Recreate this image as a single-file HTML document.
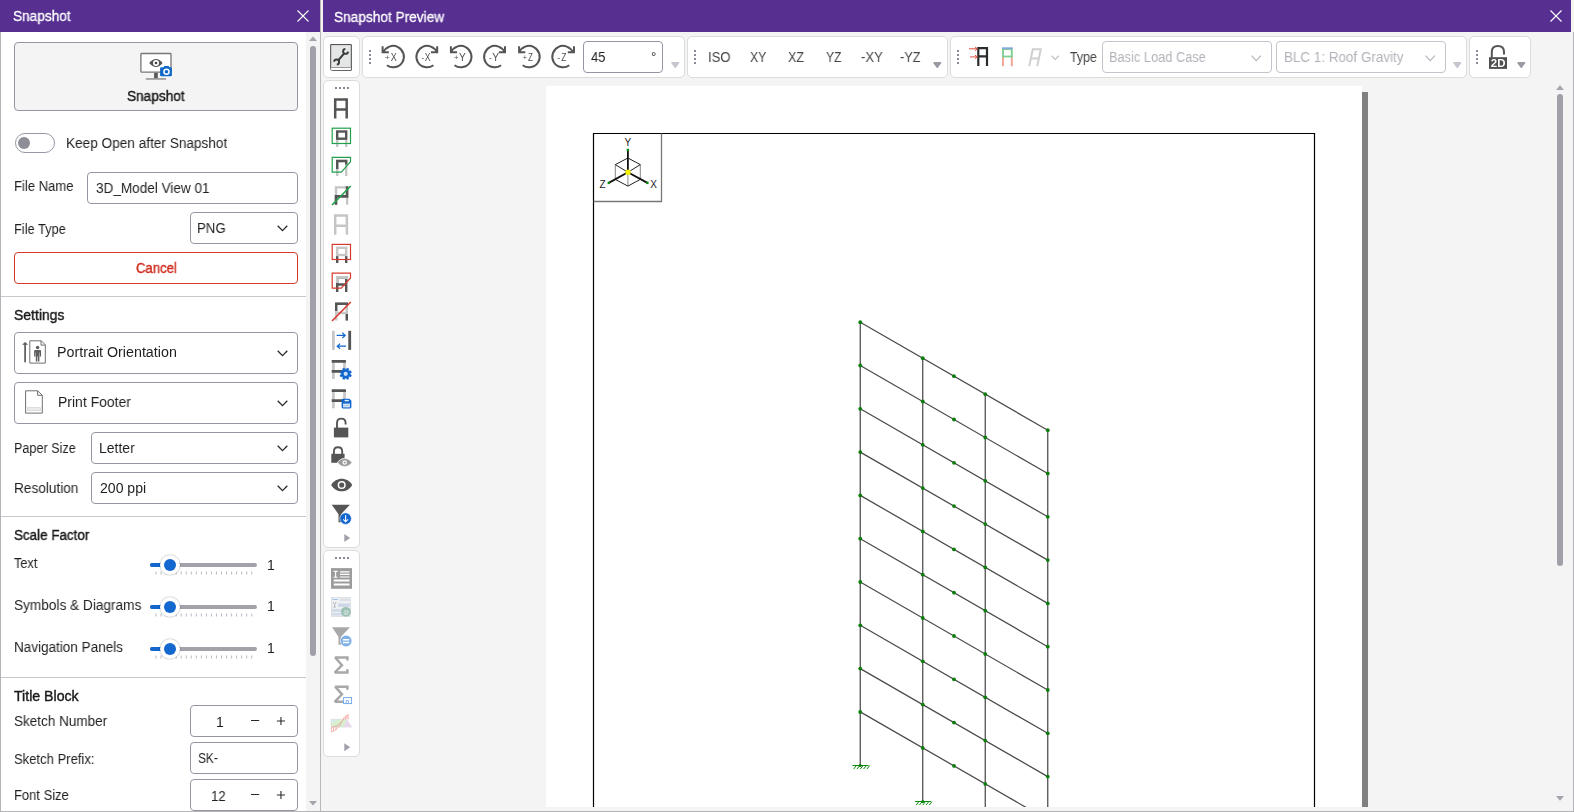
<!DOCTYPE html>
<html lang="en">
<head>
<meta charset="utf-8">
<title>Snapshot Preview</title>
<style>
*{box-sizing:border-box;margin:0;padding:0}
html,body{width:1574px;height:812px;overflow:hidden;background:#f4f4f4}
body{position:relative;font-family:"Liberation Sans",sans-serif;font-size:14px;color:#1f1f1f}
.abs{position:absolute}
.t{position:absolute;white-space:nowrap;line-height:1;transform-origin:0 0;will-change:transform}
.tb{-webkit-text-stroke:0.3px #fff}
.titlebar{position:absolute;top:0;height:32px;background:#562f91}
.box{position:absolute;border:1px solid #9696a3;border-radius:4px;background:#fff}
.grp{position:absolute;background:#fff;border:1px solid #dcdcdc;border-radius:5px}
.hr{position:absolute;left:1px;width:305px;height:1px;background:#c6c6cc}
svg{position:absolute;overflow:visible}
.dot{position:absolute;width:2px;height:2px;background:#8a8a98}
</style>
</head>
<body>
<!-- ================= LEFT PANEL ================= -->
<div class="abs" style="left:0;top:0;width:306px;height:812px;background:#fff"></div>
<div class="abs" style="left:0;top:32px;width:1px;height:780px;background:#b4b4b8"></div>
<div class="titlebar" style="left:0;width:320px"></div>
<span class="t tb" style="left:13.20px;top:9.00px;font-size:14.0px;transform:scaleX(0.9735);color:#fff">Snapshot</span>
<svg style="left:297px;top:10px" width="12" height="12" viewBox="0 0 12 12"><path d="M0.5 0.5L11.5 11.5M11.5 0.5L0.5 11.5" stroke="#fff" stroke-width="1.1" fill="none"/></svg>

<!-- snapshot button -->
<div class="box" style="left:14px;top:42px;width:284px;height:69px;background:#f4f4f4"></div>
<svg style="left:139px;top:51px" width="34" height="30" viewBox="139 51 34 30">
  <rect x="140.9" y="53.5" width="30.1" height="18.7" fill="#fff" stroke="#777" stroke-width="1.3" rx="0.8"/>
  <rect x="154.1" y="72.8" width="3.7" height="5.6" fill="#5a5a5a"/>
  <rect x="145.8" y="78.2" width="20.2" height="1.5" fill="#909090"/>
  <path d="M149.2 63C151.5 60.2 153.7 59 156 59s4.5 1.2 6.6 4c-2.1 2.8-4.3 4-6.6 4s-4.5-1.2-6.8-4z" fill="#555"/>
  <circle cx="156" cy="63" r="3" fill="#fff"/><circle cx="156" cy="63" r="1.3" fill="#444"/>
  <path d="M160.1 68.3q0-1.1 1.1-1.1h2.3l0.9-1.2h4.2l0.9 1.2h1.3q1.1 0 1.1 1.1v6.9q0 1.1-1.1 1.1h-9.6q-1.1 0-1.1-1.1z" fill="#1068c8"/>
  <circle cx="166.5" cy="71.7" r="3.3" fill="#fff"/><circle cx="166.5" cy="71.7" r="1.8" fill="#1068c8"/>
</svg>
<span class="t" style="left:127.30px;top:89.00px;font-size:14px;transform:scaleX(0.9735);-webkit-text-stroke:0.4px;color:#1a1a1a">Snapshot</span>

<!-- toggle -->
<div class="abs" style="left:15px;top:133px;width:40px;height:20px;border:1px solid #9698a4;border-radius:10px;background:#fff"></div>
<div class="abs" style="left:18px;top:137px;width:12px;height:12px;border-radius:6px;background:#8e8e98"></div>
<span class="t" style="left:66.33px;top:136.00px;font-size:14px;transform:scaleX(0.9727)">Keep Open after Snapshot</span>

<!-- file name -->
<span class="t" style="left:13.67px;top:179.00px;font-size:14px;transform:scaleX(0.9332)">File Name</span>
<div class="box" style="left:87px;top:172px;width:211px;height:32px"></div>
<span class="t" style="left:95.50px;top:181.00px;font-size:14px;transform:scaleX(0.9679)">3D_Model View 01</span>

<!-- file type -->
<span class="t" style="left:13.68px;top:222.00px;font-size:14px;transform:scaleX(0.9158)">File Type</span>
<div class="box" style="left:190px;top:212px;width:108px;height:32px"></div>
<span class="t" style="left:197.45px;top:221.00px;font-size:14px;transform:scaleX(0.9456)">PNG</span>
<svg style="left:277px;top:225px" width="11" height="7" viewBox="0 0 11 7"><path d="M0.7 0.8L5.5 5.6L10.3 0.8" stroke="#2a2a2a" stroke-width="1.3" fill="none"/></svg>

<!-- cancel -->
<div class="box" style="left:14px;top:252px;width:284px;height:32px;border-color:#d63a2c"></div>
<span class="t" style="left:135.80px;top:261.00px;font-size:14px;transform:scaleX(0.9363);-webkit-text-stroke:0.4px;color:#cf2a1d">Cancel</span>

<div class="hr" style="top:296px"></div>
<span class="t" style="left:14.20px;top:308.00px;font-size:14px;transform:scaleX(0.9963);-webkit-text-stroke:0.4px;color:#1a1a1a">Settings</span>

<!-- portrait orientation -->
<div class="box" style="left:14px;top:332px;width:284px;height:42px"></div>
<svg style="left:20px;top:338px" width="30" height="28" viewBox="20 338 30 28">
  <path d="M25.1 362.2V343.5" stroke="#5a5a5a" stroke-width="1.7" fill="none"/>
  <path d="M22.1 344.7L25.1 342L28.1 344.7z" fill="#5a5a5a"/>
  <path d="M29.8 340.8H41.3L45.3 344.8V363.1H29.8z" fill="#fff" stroke="#707070" stroke-width="1"/>
  <path d="M41.0 340.8V345.1H45.3" fill="none" stroke="#707070" stroke-width="1"/>
  <circle cx="37.6" cy="347.5" r="1.7" fill="#5e5e5e"/>
  <path d="M34.1 351.2q0-1.2 1.2-1.2h4.6q1.2 0 1.2 1.2v5.2h-1.3v-4h-0.4v9.2h-1.5v-5h-0.6v5h-1.5v-9.2h-0.4v4h-1.3z" fill="#5e5e5e"/>
</svg>
<span class="t" style="left:57.48px;top:345.00px;font-size:14px;transform:scaleX(1.0198)">Portrait Orientation</span>
<svg style="left:277px;top:350px" width="11" height="7" viewBox="0 0 11 7"><path d="M0.7 0.8L5.5 5.6L10.3 0.8" stroke="#2a2a2a" stroke-width="1.3" fill="none"/></svg>

<!-- print footer -->
<div class="box" style="left:14px;top:382px;width:284px;height:42px"></div>
<svg style="left:20px;top:388px" width="30" height="28" viewBox="20 388 30 28">
  <path d="M25.6 390.8H37.6L42.3 395.3V413.1H25.6z" fill="#fff" stroke="#707070" stroke-width="1"/>
  <path d="M37.6 390.8V395.3H42.3" fill="none" stroke="#707070" stroke-width="1"/>
  <rect x="27.6" y="407.7" width="12.8" height="2.8" fill="#ececec" stroke="#cfcfcf" stroke-width="0.7"/>
</svg>
<span class="t" style="left:57.50px;top:395.00px;font-size:14px;transform:scaleX(0.9962)">Print Footer</span>
<svg style="left:277px;top:400px" width="11" height="7" viewBox="0 0 11 7"><path d="M0.7 0.8L5.5 5.6L10.3 0.8" stroke="#2a2a2a" stroke-width="1.3" fill="none"/></svg>

<!-- paper size -->
<span class="t" style="left:13.70px;top:441.00px;font-size:14px;transform:scaleX(0.9011)">Paper Size</span>
<div class="box" style="left:91px;top:432px;width:207px;height:32px"></div>
<span class="t" style="left:98.60px;top:441.00px;font-size:14px;transform:scaleX(0.9961)">Letter</span>
<svg style="left:277px;top:445px" width="11" height="7" viewBox="0 0 11 7"><path d="M0.7 0.8L5.5 5.6L10.3 0.8" stroke="#2a2a2a" stroke-width="1.3" fill="none"/></svg>

<!-- resolution -->
<span class="t" style="left:13.63px;top:481.00px;font-size:14px;transform:scaleX(0.9741)">Resolution</span>
<div class="box" style="left:91px;top:472px;width:207px;height:32px"></div>
<span class="t" style="left:99.60px;top:481.00px;font-size:14px;transform:scaleX(1.0039)">200 ppi</span>
<svg style="left:277px;top:485px" width="11" height="7" viewBox="0 0 11 7"><path d="M0.7 0.8L5.5 5.6L10.3 0.8" stroke="#2a2a2a" stroke-width="1.3" fill="none"/></svg>

<div class="hr" style="top:516px"></div>
<span class="t" style="left:14.20px;top:528.00px;font-size:14px;transform:scaleX(0.9566);-webkit-text-stroke:0.4px;color:#1a1a1a">Scale Factor</span>

<!-- sliders -->
<span class="t" style="left:14.20px;top:556.00px;font-size:14px;transform:scaleX(0.9075)">Text</span>
<div class="abs" style="left:150px;top:563px;width:107px;height:4px;border-radius:2px;background:#a2a2aa"></div>
<div class="abs" style="left:150px;top:563px;width:20px;height:4px;border-radius:2px;background:#1467cf"></div>
<svg style="left:0;top:0" width="1" height="1"><path d="M156.00 571.5V574.5M161.04 571.5V574.5M166.08 571.5V574.5M171.12 571.5V574.5M176.16 571.5V574.5M181.20 571.5V574.5M186.24 571.5V574.5M191.28 571.5V574.5M196.32 571.5V574.5M201.36 571.5V574.5M206.40 571.5V574.5M211.44 571.5V574.5M216.48 571.5V574.5M221.52 571.5V574.5M226.56 571.5V574.5M231.60 571.5V574.5M236.64 571.5V574.5M241.68 571.5V574.5M246.72 571.5V574.5M251.76 571.5V574.5" stroke="#b9b9c1" stroke-width="1" fill="none"/></svg>
<div class="abs" style="left:160.4px;top:555px;width:20px;height:20px;border-radius:10px;background:#fff;box-shadow:0 0 1.5px rgba(0,0,0,.45)"></div>
<div class="abs" style="left:164.4px;top:559px;width:12px;height:12px;border-radius:6px;background:#1467cf"></div>
<span class="t" style="left:266.50px;top:558.00px;font-size:14px;transform:scaleX(1.0000)">1</span>
<span class="t" style="left:14.20px;top:598.00px;font-size:14px;transform:scaleX(0.9740)">Symbols &amp; Diagrams</span>
<div class="abs" style="left:150px;top:605px;width:107px;height:4px;border-radius:2px;background:#a2a2aa"></div>
<div class="abs" style="left:150px;top:605px;width:20px;height:4px;border-radius:2px;background:#1467cf"></div>
<svg style="left:0;top:0" width="1" height="1"><path d="M156.00 613.5V616.5M161.04 613.5V616.5M166.08 613.5V616.5M171.12 613.5V616.5M176.16 613.5V616.5M181.20 613.5V616.5M186.24 613.5V616.5M191.28 613.5V616.5M196.32 613.5V616.5M201.36 613.5V616.5M206.40 613.5V616.5M211.44 613.5V616.5M216.48 613.5V616.5M221.52 613.5V616.5M226.56 613.5V616.5M231.60 613.5V616.5M236.64 613.5V616.5M241.68 613.5V616.5M246.72 613.5V616.5M251.76 613.5V616.5" stroke="#b9b9c1" stroke-width="1" fill="none"/></svg>
<div class="abs" style="left:160.4px;top:597px;width:20px;height:20px;border-radius:10px;background:#fff;box-shadow:0 0 1.5px rgba(0,0,0,.45)"></div>
<div class="abs" style="left:164.4px;top:601px;width:12px;height:12px;border-radius:6px;background:#1467cf"></div>
<span class="t" style="left:266.50px;top:599.00px;font-size:14px;transform:scaleX(1.0000)">1</span>
<span class="t" style="left:13.63px;top:640.00px;font-size:14px;transform:scaleX(0.9656)">Navigation Panels</span>
<div class="abs" style="left:150px;top:647px;width:107px;height:4px;border-radius:2px;background:#a2a2aa"></div>
<div class="abs" style="left:150px;top:647px;width:20px;height:4px;border-radius:2px;background:#1467cf"></div>
<svg style="left:0;top:0" width="1" height="1"><path d="M156.00 655.5V658.5M161.04 655.5V658.5M166.08 655.5V658.5M171.12 655.5V658.5M176.16 655.5V658.5M181.20 655.5V658.5M186.24 655.5V658.5M191.28 655.5V658.5M196.32 655.5V658.5M201.36 655.5V658.5M206.40 655.5V658.5M211.44 655.5V658.5M216.48 655.5V658.5M221.52 655.5V658.5M226.56 655.5V658.5M231.60 655.5V658.5M236.64 655.5V658.5M241.68 655.5V658.5M246.72 655.5V658.5M251.76 655.5V658.5" stroke="#b9b9c1" stroke-width="1" fill="none"/></svg>
<div class="abs" style="left:160.4px;top:639px;width:20px;height:20px;border-radius:10px;background:#fff;box-shadow:0 0 1.5px rgba(0,0,0,.45)"></div>
<div class="abs" style="left:164.4px;top:643px;width:12px;height:12px;border-radius:6px;background:#1467cf"></div>
<span class="t" style="left:266.50px;top:641.00px;font-size:14px;transform:scaleX(1.0000)">1</span>


<div class="hr" style="top:677px"></div>
<span class="t" style="left:14.20px;top:689.00px;font-size:14px;transform:scaleX(1.0099);-webkit-text-stroke:0.4px;color:#1a1a1a">Title Block</span>

<span class="t" style="left:14.20px;top:714.00px;font-size:14px;transform:scaleX(0.9657)">Sketch Number</span>
<div class="box" style="left:190px;top:705px;width:108px;height:32px"></div>
<span class="t" style="left:215.70px;top:715.00px;font-size:14px;transform:scaleX(1.0000)">1</span>
<svg style="left:250px;top:715px" width="36" height="12" viewBox="250 715 36 12"><path d="M251 720.5H259.2M276.9 721H285M280.95 717V725" stroke="#2a2a2a" stroke-width="1.1" fill="none"/></svg>

<span class="t" style="left:14.20px;top:752.00px;font-size:14px;transform:scaleX(0.9324)">Sketch Prefix:</span>
<div class="box" style="left:190px;top:742px;width:108px;height:32px"></div>
<span class="t" style="left:198.40px;top:751.00px;font-size:14px;transform:scaleX(0.8490)">SK-</span>

<span class="t" style="left:13.67px;top:788.00px;font-size:14px;transform:scaleX(0.9271)">Font Size</span>
<div class="box" style="left:190px;top:779px;width:108px;height:32px"></div>
<span class="t" style="left:211.05px;top:789.00px;font-size:14px;transform:scaleX(0.9468)">12</span>
<svg style="left:250px;top:789px" width="36" height="12" viewBox="250 789 36 12"><path d="M251 794.5H259.2M276.9 795H285M280.95 791V799" stroke="#2a2a2a" stroke-width="1.1" fill="none"/></svg>

<!-- left scrollbar -->
<div class="abs" style="left:306px;top:32px;width:14px;height:780px;background:#f4f4f4"></div>
<svg style="left:309px;top:36px" width="8" height="5" viewBox="0 0 8 5"><path d="M0 5L4 0.4L8 5z" fill="#a4a4ac"/></svg>
<div class="abs" style="left:310px;top:46px;width:6px;height:610px;border-radius:3px;background:#a0a0a8"></div>
<svg style="left:309px;top:801px" width="8" height="5" viewBox="0 0 8 5"><path d="M0 0L4 4.6L8 0z" fill="#a4a4ac"/></svg>

<!-- ================= DIVIDER ================= -->
<div class="abs" style="left:320px;top:0;width:3px;height:812px;background:#f4f4f4"></div>
<div class="abs" style="left:320px;top:0;width:1px;height:812px;background:#b9b9b9"></div>

<!-- ================= RIGHT PANEL ================= -->
<div class="titlebar" style="left:323px;width:1248px"></div>
<span class="t tb" style="left:334.00px;top:10.00px;font-size:14.0px;transform:scaleX(0.9760);color:#fff">Snapshot Preview</span>
<svg style="left:1550px;top:10px" width="12" height="12" viewBox="0 0 12 12"><path d="M0.5 0.5L11.5 11.5M11.5 0.5L0.5 11.5" stroke="#fff" stroke-width="1.1" fill="none"/></svg>

<div class="grp" style="left:323px;top:36px;width:37px;height:42px"></div>
<div class="grp" style="left:362px;top:36px;width:323px;height:42px"></div>
<div class="grp" style="left:687px;top:36px;width:261px;height:42px"></div>
<div class="grp" style="left:950px;top:36px;width:517px;height:42px"></div>
<div class="grp" style="left:1469px;top:36px;width:62px;height:42px"></div>
<svg style="left:328px;top:42px" width="26" height="31" viewBox="328 42 26 31">
  <path d="M330.7 44.6H351.3V70.3H332.2Q330.7 70.3 330.7 68.8z" fill="#e5e7e6" stroke="#444" stroke-width="1"/>
  <rect x="331.2" y="68" width="19.6" height="1.9" fill="#fff"/>
  <rect x="331.2" y="67" width="19.6" height="1" fill="#999"/>
  <path d="M338.2 60.4L344.6 52.9" stroke="#3a3a3a" stroke-width="2.1" fill="none"/><path d="M345.38 48.9A2.5 2.5 0 1 0 348.09 51.62M336.82 64.49A2.5 2.5 0 1 0 334.11 61.78" stroke="#3a3a3a" stroke-width="1.9" fill="none"/>
</svg>
<div class="dot" style="left:369px;top:50px"></div><div class="dot" style="left:369px;top:54px"></div><div class="dot" style="left:369px;top:58px"></div><div class="dot" style="left:369px;top:62px"></div>
<div class="dot" style="left:694px;top:50px"></div><div class="dot" style="left:694px;top:54px"></div><div class="dot" style="left:694px;top:58px"></div><div class="dot" style="left:694px;top:62px"></div>
<div class="dot" style="left:957px;top:50px"></div><div class="dot" style="left:957px;top:54px"></div><div class="dot" style="left:957px;top:58px"></div><div class="dot" style="left:957px;top:62px"></div>
<div class="dot" style="left:1476px;top:50px"></div><div class="dot" style="left:1476px;top:54px"></div><div class="dot" style="left:1476px;top:58px"></div><div class="dot" style="left:1476px;top:62px"></div>
<svg style="left:0;top:0" width="1" height="1"><path d="M386.91 65.26A10.7 10.7 0 1 0 383.28 52.60M382.60 46.3V52.2H388.80" stroke="#555" stroke-width="2" fill="none"/><text x="384.75" y="59.9" font-size="7.6" fill="#5a5a5a" textLength="5.1" lengthAdjust="spacingAndGlyphs">+</text><text x="390.7" y="60.9" font-size="10.2" fill="#4f4f4f" textLength="6.0" lengthAdjust="spacingAndGlyphs">X</text></svg>
<svg style="left:0;top:0" width="1" height="1"><path d="M433.39 65.26A10.7 10.7 0 1 1 437.02 52.60M437.20 46.3V52.2H431.00" stroke="#555" stroke-width="2" fill="none"/><text x="421.50" y="60.6" font-size="8.5" fill="#555" textLength="2.5" lengthAdjust="spacingAndGlyphs">-</text><text x="424.8" y="60.9" font-size="10.2" fill="#4f4f4f" textLength="5.8" lengthAdjust="spacingAndGlyphs">X</text></svg>
<svg style="left:0;top:0" width="1" height="1"><path d="M454.51 65.26A10.7 10.7 0 1 0 450.88 52.60M450.90 46.3V52.2H457.10" stroke="#555" stroke-width="2" fill="none"/><text x="453.75" y="59.9" font-size="7.6" fill="#5a5a5a" textLength="5.0" lengthAdjust="spacingAndGlyphs">+</text><text x="458.9" y="60.9" font-size="10.2" fill="#4f4f4f" textLength="6.8" lengthAdjust="spacingAndGlyphs">Y</text></svg>
<svg style="left:0;top:0" width="1" height="1"><path d="M501.09 65.26A10.7 10.7 0 1 1 504.72 52.60M505.00 46.3V52.2H498.80" stroke="#555" stroke-width="2" fill="none"/><text x="489.00" y="60.6" font-size="8.5" fill="#555" textLength="2.9" lengthAdjust="spacingAndGlyphs">-</text><text x="492.2" y="60.9" font-size="10.2" fill="#4f4f4f" textLength="6.8" lengthAdjust="spacingAndGlyphs">Y</text></svg>
<svg style="left:0;top:0" width="1" height="1"><path d="M522.71 65.26A10.7 10.7 0 1 0 519.08 52.60M519.10 46.3V52.2H525.30" stroke="#555" stroke-width="2" fill="none"/><text x="522.45" y="59.9" font-size="7.6" fill="#5a5a5a" textLength="4.7" lengthAdjust="spacingAndGlyphs">+</text><text x="528.0" y="60.9" font-size="10.2" fill="#4f4f4f" textLength="4.9" lengthAdjust="spacingAndGlyphs">Z</text></svg>
<svg style="left:0;top:0" width="1" height="1"><path d="M569.29 65.26A10.7 10.7 0 1 1 572.92 52.60M574.00 46.3V52.2H567.80" stroke="#555" stroke-width="2" fill="none"/><text x="557.30" y="60.6" font-size="8.5" fill="#555" textLength="3.0" lengthAdjust="spacingAndGlyphs">-</text><text x="561.2" y="60.9" font-size="10.2" fill="#4f4f4f" textLength="5.2" lengthAdjust="spacingAndGlyphs">Z</text></svg>
<div class="box" style="left:583px;top:41px;width:80px;height:32px"></div>
<span class="t" style="left:591.00px;top:50.00px;font-size:14px;transform:scaleX(0.9249)">45</span>
<span class="t" style="left:650.90px;top:50.00px;font-size:14px;transform:scaleX(0.9200)">°</span>
<svg style="left:670.6px;top:62.2px" width="9" height="6" viewBox="0 0 9 6"><path d="M1 0.8H7.6L4.3 5.2z" fill="#c6c6ce" stroke="#c6c6ce" stroke-width="1.5" stroke-linejoin="round"/></svg>
<span class="t" style="left:707.87px;top:50.00px;font-size:14px;transform:scaleX(0.9299);color:#444">ISO</span>
<span class="t" style="left:750.00px;top:50.00px;font-size:14px;transform:scaleX(0.8791);color:#444">XY</span>
<span class="t" style="left:788.10px;top:50.00px;font-size:14px;transform:scaleX(0.8998);color:#444">XZ</span>
<span class="t" style="left:826.30px;top:50.00px;font-size:14px;transform:scaleX(0.8671);color:#444">YZ</span>
<span class="t" style="left:860.70px;top:50.00px;font-size:14px;transform:scaleX(0.9333);color:#444">-XY</span>
<span class="t" style="left:900.00px;top:50.00px;font-size:14px;transform:scaleX(0.9087);color:#444">-YZ</span>
<svg style="left:933.4px;top:62.2px" width="9" height="6" viewBox="0 0 9 6"><path d="M1 0.8H7.6L4.3 5.2z" fill="#9a9aa5" stroke="#9a9aa5" stroke-width="1.5" stroke-linejoin="round"/></svg>
<svg style="left:0;top:0" width="1" height="1">
  <path d="M978.3 66V48.1H987V66M978.3 56.4H987" stroke="#2b2b2b" stroke-width="2.2" fill="none"/>
  <path d="M969 48.8H977M970 56.9H977" stroke="#e0513e" stroke-width="1" fill="none"/>
  <path d="M975 47L977.3 48.8L975 50.6M975 55.1L977.3 56.9L975 58.7" stroke="#e0513e" stroke-width="1" fill="none"/>
  <path d="M1003 66.2V57" stroke="#f2a394" stroke-width="1.9" fill="none"/><path d="M1011.8 66.2V57" stroke="#f2a394" stroke-width="1.9" fill="none"/>
  <path d="M1003 57.2V49H1011.8V57.2" stroke="#7fcf93" stroke-width="1.9" fill="none"/>
  <path d="M1002 56.5H1012.8" stroke="#7fcf93" stroke-width="1.8" fill="none"/>
  <path d="M1002 48.2H1012.8" stroke="#86a8de" stroke-width="1.8" fill="none"/>
  <path d="M1029.2 66.2L1032.8 49.2H1040.8L1037.2 66.2M1030.9 58.5H1038.9" stroke="#d0d0d0" stroke-width="2" fill="none"/>
  <path d="M1051.6 55.8L1055.2 59.4L1058.8 55.8" stroke="#c2c2c8" stroke-width="1.3" fill="none"/>
</svg>
<span class="t" style="left:1069.70px;top:50.00px;font-size:14px;transform:scaleX(0.8866);color:#444">Type</span>
<div class="box" style="left:1102px;top:41px;width:170px;height:32px;border-color:#c4c4cc"></div>
<span class="t" style="left:1109.39px;top:50.00px;font-size:14px;transform:scaleX(0.9148);color:#b2b2ba">Basic Load Case</span>
<svg style="left:1251px;top:54.5px" width="11" height="7" viewBox="0 0 11 7"><path d="M0.5 0.7L5.2 5.6L9.9 0.7" stroke="#b2b2ba" stroke-width="1.1" fill="none"/></svg>
<div class="box" style="left:1276px;top:41px;width:170px;height:32px;border-color:#c4c4cc"></div>
<span class="t" style="left:1283.54px;top:50.00px;font-size:14px;transform:scaleX(0.9596);color:#b2b2ba">BLC 1: Roof Gravity</span>
<svg style="left:1425px;top:54.5px" width="11" height="7" viewBox="0 0 11 7"><path d="M0.5 0.7L5.2 5.6L9.9 0.7" stroke="#b2b2ba" stroke-width="1.1" fill="none"/></svg>
<svg style="left:1452.6px;top:62.2px" width="9" height="6" viewBox="0 0 9 6"><path d="M1 0.8H7.6L4.3 5.2z" fill="#c6c6ce" stroke="#c6c6ce" stroke-width="1.5" stroke-linejoin="round"/></svg>
<svg style="left:0;top:0" width="1" height="1">
  <path d="M1491.8 57.5V52Q1491.8 46 1497.9 46Q1504 46 1504 52V54.4" stroke="#555" stroke-width="2" fill="none"/>
  <rect x="1489" y="57.2" width="18" height="11.7" fill="#4f4f4f"/>
  <text x="1490.8" y="67.4" font-size="11" font-weight="bold" fill="#fff" textLength="14.6" lengthAdjust="spacingAndGlyphs">2D</text>
</svg>
<svg style="left:1516.7px;top:62.2px" width="9" height="6" viewBox="0 0 9 6"><path d="M1 0.8H7.6L4.3 5.2z" fill="#9a9aa5" stroke="#9a9aa5" stroke-width="1.5" stroke-linejoin="round"/></svg>


<div class="grp" style="left:323px;top:80px;width:37px;height:468px"></div>
<div class="grp" style="left:323px;top:550px;width:37px;height:207px"></div>
<div class="dot" style="left:335px;top:87px"></div><div class="dot" style="left:339px;top:87px"></div><div class="dot" style="left:343px;top:87px"></div><div class="dot" style="left:347px;top:87px"></div>
<div class="dot" style="left:335px;top:557px"></div><div class="dot" style="left:339px;top:557px"></div><div class="dot" style="left:343px;top:557px"></div><div class="dot" style="left:347px;top:557px"></div>
<svg style="left:0;top:0" width="1" height="1">
<path d="M335.2 118.6V99.4H346.7V118.6M335.2 109.6H346.7" stroke="#555" stroke-width="2.5" fill="none"/>
<path d="M337.2 140V147M346.2 140V147" stroke="#c6c6c6" stroke-width="2.4" fill="none"/><rect x="337.2" y="131.5" width="9" height="7.2" stroke="#555" stroke-width="2.4" fill="none"/><rect x="332.2" y="128.2" width="18.3" height="15.3" stroke="#22a04b" stroke-width="1.2" fill="none"/>
<path d="M337.2 176V161H346.2V176" stroke="#c6c6c6" stroke-width="2.4" fill="none"/><path d="M337.2 169V161H346.2V164.5" stroke="#555" stroke-width="2.4" fill="none"/><path d="M332.2 157.3H350.5V161.7L341.3 172.2H332.2z" stroke="#22a04b" stroke-width="1.2" fill="none"/>
<path d="M336 204.7V187.4H347.1V204.7" stroke="#c6c6c6" stroke-width="2.4" fill="none"/><path d="M336 204.7V196.4H347.1V186.3" stroke="#555" stroke-width="2.6" fill="none"/><path d="M332 205L350.8 186" stroke="#22a04b" stroke-width="1.6" fill="none"/>
<path d="M335.2 234.7V215.6H346.9V234.7M335.2 225.8H346.9" stroke="#c6c6c6" stroke-width="2.5" fill="none"/>
<path d="M337.2 256V263M346.2 256V263" stroke="#555" stroke-width="2.4" fill="none"/><rect x="337.2" y="247.8" width="9" height="7.2" stroke="#c6c6c6" stroke-width="2.4" fill="none"/><rect x="332.2" y="244.4" width="18.3" height="15.1" stroke="#d63a2c" stroke-width="1.2" fill="none"/>
<path d="M337.2 292V277.2H346.2V292M337.2 284.5H346.2" stroke="#555" stroke-width="2.4" fill="none"/><path d="M337.2 283V277.2H346.2V279" stroke="#c6c6c6" stroke-width="2.4" fill="none"/><path d="M332.2 273.2H350.5V277.9L341.3 288.2H332.2z" stroke="#d63a2c" stroke-width="1.2" fill="none"/>
<path d="M336.2 320.6V303.7H346.8V320.6M336.2 313H346.8" stroke="#c6c6c6" stroke-width="2.4" fill="none"/><path d="M336.2 311V303.7H346.8V305M346.8 314V320.6" stroke="#555" stroke-width="2.4" fill="none"/><path d="M332 321L350.8 302" stroke="#d63a2c" stroke-width="1.6" fill="none"/>
<rect x="332" y="330.8" width="2.8" height="19.1" fill="#c6c6c6"/><rect x="348.3" y="330.8" width="2.8" height="19.1" fill="#555"/><path d="M336.6 335.4H345M342.3 332.8L345.2 335.4L342.3 338M346 346.2H337.4M340.1 343.6L337.2 346.2L340.1 348.8" stroke="#1267cf" stroke-width="1.2" fill="none"/>
<path d="M333.4 360.9V378.9M344.5 360.9V371.9" stroke="#c6c6c6" stroke-width="2.7" fill="none"/><path d="M331.7 361.29999999999995H345.9M331.7 371.29999999999995H343" stroke="#555" stroke-width="2.8" fill="none"/><path d="M349.98 374.20L351.45 375.10L350.69 376.95L349.01 376.55L348.45 377.11L348.85 378.79L347.00 379.55L346.10 378.08L345.30 378.08L344.40 379.55L342.55 378.79L342.95 377.11L342.39 376.55L340.71 376.95L339.95 375.10L341.42 374.20L341.42 373.40L339.95 372.50L340.71 370.65L342.39 371.05L342.95 370.49L342.55 368.81L344.40 368.05L345.30 369.52L346.10 369.52L347.00 368.05L348.85 368.81L348.45 370.49L349.01 371.05L350.69 370.65L351.45 372.50L349.98 373.40z" fill="#1267cf" stroke="#1267cf" stroke-width="0.5" stroke-linejoin="round"/><circle cx="345.7" cy="373.8" r="2.1" fill="#cfe0f6"/>
<path d="M333.4 390.2V408.2M344.5 390.2V401.2" stroke="#c6c6c6" stroke-width="2.7" fill="none"/><path d="M331.7 390.59999999999997H345.9M331.7 400.59999999999997H343" stroke="#555" stroke-width="2.8" fill="none"/><path d="M341.6 400.2Q341.6 398.8 343 398.8H349.4L351.4 400.8V407Q351.4 408.4 350 408.4H343Q341.6 408.4 341.6 407z" fill="#1267cf"/><rect x="344.6" y="399.9" width="4.2" height="1.4" fill="#e6eefa"/><rect x="343" y="403.6" width="7" height="3.8" fill="#d3e2f6"/><rect x="343" y="405.2" width="7" height="0.6" fill="#9fc0ec"/>
<path d="M337 428V423Q337 418.6 341.3 418.6Q345.6 418.6 345.6 423V424.6" stroke="#555" stroke-width="1.9" fill="none"/><rect x="333.9" y="427.6" width="14.4" height="9.8" fill="#555"/>
<path d="M333.9 454V451.5Q333.9 447.3 338 447.3Q342.2 447.3 342.2 451.5V454" stroke="#555" stroke-width="1.9" fill="none"/><rect x="331.3" y="453.8" width="13.3" height="9" fill="#555"/><path d="M337.2 462.5Q340.8 458.2 344.7 458.2Q348.6 458.2 352.2 462.5Q348.6 466.8 344.7 466.8Q340.8 466.8 337.2 462.5z" fill="#9a9a9a" stroke="#fff" stroke-width="0.8"/><circle cx="344.7" cy="462.5" r="2.2" fill="#fff"/><circle cx="344.7" cy="462.5" r="1" fill="#9a9a9a"/>
<path d="M331.2 485C333.5 480.8 337.5 478.7 341.7 478.7C345.9 478.7 349.9 480.8 352.2 485C349.9 489.2 345.9 491.3 341.7 491.3C337.5 491.3 333.5 489.2 331.2 485z" fill="#555"/><circle cx="341.7" cy="485" r="3.3" fill="none" stroke="#fff" stroke-width="1.5"/>
<path d="M331.7 504.7H349.9L341 514.2V522.3H338.5V514.2z" fill="#555"/><circle cx="345.6" cy="518.6" r="5.8" fill="#1267cf" stroke="#fff" stroke-width="0.6"/><path d="M345.6 515.3V521.6M343.2 519.3L345.6 521.8L348 519.3" stroke="#fff" stroke-width="1.1" fill="none"/>
<path d="M344.3 534V542L350.2 538z" fill="#a0a0aa"/><path d="M344.3 743.2V751.2L350.2 747.2z" fill="#a0a0aa"/>
<rect x="331" y="568.1" width="21" height="20.7" fill="#9c9c9c"/><path d="M340 571.8H349.5M340 574.4H349.5M340 577H349.5" stroke="#fff" stroke-width="1.2"/><path d="M333.8 580.6H349.5M333.8 584.6H349.5" stroke="#fff" stroke-width="2"/><path d="M333.6 571.4H337.6M333.6 577.2H337.6M335.6 571.4V577.2" stroke="#fff" stroke-width="1.1" fill="none"/>
<rect x="331.3" y="597.6" width="19.2" height="18.8" fill="#eef0f3" stroke="#cfd2d6" stroke-width="0.6"/><rect x="338.2" y="603.5" width="11.6" height="3.4" fill="#ccd6e8"/><rect x="332" y="609" width="12" height="3" fill="#d4dcea"/><rect x="332" y="613" width="11" height="2.6" fill="#d4dcea"/><rect x="340" y="598.4" width="9.5" height="2.6" fill="#dcdfe4"/><path d="M332.5 599.5H338" stroke="#8db4e6" stroke-width="0.8"/><path d="M333.2 602L334.6 604.6V607M336 602L334.6 604.6M333.4 607.2H335.8" stroke="#999" stroke-width="0.6" fill="none"/><circle cx="345.9" cy="611.8" r="4.9" fill="#9cc0b2"/><text x="343.2" y="614" font-size="6" fill="#e6f0ec">@</text>
<path d="M332 627.2H350L341 636.7V644.7H338.5V636.7z" fill="#a8a8a8"/><circle cx="346.1" cy="641" r="5.8" fill="#7fb0e8" stroke="#fff" stroke-width="0.6"/><path d="M342.9 639.7H349.3M342.9 642.4H349.3" stroke="#fff" stroke-width="1.5"/>
<path d="M347.4 660.6V657.5H335.2L342 665.1L334.8 672.5000000000001H347.4V669.2" stroke="#a8a8a8" stroke-width="2.5" fill="none" stroke-linejoin="miter" stroke-miterlimit="2"/><path d="M347.4 689.8V686.6999999999999H335.2L342 694.3L334.8 701.7H347.4V698.4" stroke="#a8a8a8" stroke-width="2.5" fill="none" stroke-linejoin="miter" stroke-miterlimit="2"/><rect x="343.6" y="697.6" width="8" height="6" fill="#fff" stroke="#6aa6ea" stroke-width="0.9"/><path d="M346.2 703.4V700.6H348.4V703.4" stroke="#6aa6ea" stroke-width="0.8" fill="none"/>
<path d="M331.2 719.4H346.6L351.6 727H331.2z" fill="#d7efcf" stroke="#d2d2d2" stroke-width="0.6"/><path d="M346.6 719.4L351.6 727H344z" fill="#ead6f0"/><path d="M331.2 723L338 719.4H331.2z" fill="#d6e6f8" opacity=".8"/><path d="M331.3 727.5Q338 726.5 341.6 722Q345 716.5 348.2 714.3V719.4M331.3 732Q338.5 729.5 341.6 722M343.6 719.4V717.6M345.4 719.4V716M347 719.4V715M331.4 727.5V732M333.5 727.2V731M336 726.6V730" stroke="#f08a84" stroke-width="0.6" fill="none"/>
</svg>


<div class="abs" style="left:546px;top:86px;width:816px;height:721px;background:#fff"></div>
<div class="abs" style="left:1362px;top:92px;width:6px;height:715px;background:#808080"></div>
<svg style="left:1556px;top:84.5px" width="8" height="5" viewBox="0 0 8 5"><path d="M0 5L4 0.3L8 5z" fill="#a4a4ac"/></svg>
<div class="abs" style="left:1557.2px;top:94px;width:5.8px;height:472px;border-radius:2.9px;background:#a0a0a8"></div>
<svg style="left:1556px;top:795.5px" width="8" height="5" viewBox="0 0 8 5"><path d="M0 0L4 4.7L8 0z" fill="#a4a4ac"/></svg>
<svg style="left:546px;top:86px;overflow:hidden" width="816" height="721" viewBox="546 86 816 721">
<path d="M593.5 807V133.5H1314.5V807" stroke="#000" stroke-width="1.2" fill="none"/>
<path d="M593.5 201.5H661.5V133.5" stroke="#777" stroke-width="1.3" fill="none"/>
<path d="M615.3 164.6V179.4M640.3 164.6V179.4M627.9 172.3V186.1" stroke="#777" stroke-width="0.9" fill="none"/>
<path d="M615.3 164.6L627.9 158L640.3 164.6M615.3 179.4L627.9 186.1L640.3 179.4M627.9 172.3L615.3 164.6M627.9 172.3L640.3 164.6" stroke="#222" stroke-width="1" fill="none"/>
<path d="M627.9 150V172.3M627.9 172.3L608.8 182.9M627.9 172.3L647.4 182.9" stroke="#111" stroke-width="1.8" fill="none"/>
<rect x="625.5" y="169.8" width="5" height="5" rx="1" fill="#f5f200"/><rect x="626.6999999999999" y="148.8" width="2.4" height="2.4" fill="#0a8a0a"/><rect x="607.6" y="181.7" width="2.4" height="2.4" fill="#0a8a0a"/><rect x="646.2" y="181.7" width="2.4" height="2.4" fill="#0a8a0a"/>
<text x="624.5" y="145.7" font-size="10" fill="#222">Y</text><text x="599.4" y="187.7" font-size="10" fill="#222">Z</text><text x="650.2" y="187.7" font-size="10" fill="#222">X</text>
<path d="M860.25 322.20V765.50M922.75 358.20V801.50M985.25 394.20V837.50M1047.75 430.20V873.50M860.25 322.20L1047.75 430.20M860.25 365.50L1047.75 473.50M860.25 408.80L1047.75 516.80M860.25 452.10L1047.75 560.10M860.25 495.40L1047.75 603.40M860.25 538.70L1047.75 646.70M860.25 582.00L1047.75 690.00M860.25 625.30L1047.75 733.30M860.25 668.60L1047.75 776.60M860.25 711.90L1047.75 819.90" stroke="#4a4a4a" stroke-width="1.25" fill="none"/>
<g fill="#0b7d0b"><circle cx="860.25" cy="322.20" r="1.9"/><circle cx="922.75" cy="358.20" r="1.9"/><circle cx="985.25" cy="394.20" r="1.9"/><circle cx="1047.75" cy="430.20" r="1.9"/><circle cx="954.0" cy="376.20" r="1.9"/><circle cx="860.25" cy="365.50" r="1.9"/><circle cx="922.75" cy="401.50" r="1.9"/><circle cx="985.25" cy="437.50" r="1.9"/><circle cx="1047.75" cy="473.50" r="1.9"/><circle cx="954.0" cy="419.50" r="1.9"/><circle cx="860.25" cy="408.80" r="1.9"/><circle cx="922.75" cy="444.80" r="1.9"/><circle cx="985.25" cy="480.80" r="1.9"/><circle cx="1047.75" cy="516.80" r="1.9"/><circle cx="954.0" cy="462.80" r="1.9"/><circle cx="860.25" cy="452.10" r="1.9"/><circle cx="922.75" cy="488.10" r="1.9"/><circle cx="985.25" cy="524.10" r="1.9"/><circle cx="1047.75" cy="560.10" r="1.9"/><circle cx="954.0" cy="506.10" r="1.9"/><circle cx="860.25" cy="495.40" r="1.9"/><circle cx="922.75" cy="531.40" r="1.9"/><circle cx="985.25" cy="567.40" r="1.9"/><circle cx="1047.75" cy="603.40" r="1.9"/><circle cx="954.0" cy="549.40" r="1.9"/><circle cx="860.25" cy="538.70" r="1.9"/><circle cx="922.75" cy="574.70" r="1.9"/><circle cx="985.25" cy="610.70" r="1.9"/><circle cx="1047.75" cy="646.70" r="1.9"/><circle cx="954.0" cy="592.70" r="1.9"/><circle cx="860.25" cy="582.00" r="1.9"/><circle cx="922.75" cy="618.00" r="1.9"/><circle cx="985.25" cy="654.00" r="1.9"/><circle cx="1047.75" cy="690.00" r="1.9"/><circle cx="954.0" cy="636.00" r="1.9"/><circle cx="860.25" cy="625.30" r="1.9"/><circle cx="922.75" cy="661.30" r="1.9"/><circle cx="985.25" cy="697.30" r="1.9"/><circle cx="1047.75" cy="733.30" r="1.9"/><circle cx="954.0" cy="679.30" r="1.9"/><circle cx="860.25" cy="668.60" r="1.9"/><circle cx="922.75" cy="704.60" r="1.9"/><circle cx="985.25" cy="740.60" r="1.9"/><circle cx="1047.75" cy="776.60" r="1.9"/><circle cx="954.0" cy="722.60" r="1.9"/><circle cx="860.25" cy="711.90" r="1.9"/><circle cx="922.75" cy="747.90" r="1.9"/><circle cx="985.25" cy="783.90" r="1.9"/><circle cx="1047.75" cy="819.90" r="1.9"/><circle cx="954.0" cy="765.90" r="1.9"/></g>
<path d="M852.45 765.5H868.45M856.45 765.5L853.65 769.1M859.75 765.5L856.95 769.1M863.05 765.5L860.25 769.1M866.35 765.5L863.55 769.1M869.65 765.5L866.85 769.1" stroke="#0b8a0b" stroke-width="1" fill="none"/><circle cx="860.25" cy="765.5" r="1.5" fill="#0b7d0b"/><path d="M914.95 801.5H930.95M918.95 801.5L916.15 805.1M922.25 801.5L919.45 805.1M925.55 801.5L922.75 805.1M928.85 801.5L926.05 805.1M932.15 801.5L929.35 805.1" stroke="#0b8a0b" stroke-width="1" fill="none"/><circle cx="922.75" cy="801.5" r="1.5" fill="#0b7d0b"/>
</svg>


<!-- window borders -->
<div class="abs" style="left:1573px;top:32px;width:1px;height:780px;background:#b4b4b8"></div>
<div class="abs" style="left:0;top:811px;width:1574px;height:1px;background:#b4b4b8"></div>
</body>
</html>
